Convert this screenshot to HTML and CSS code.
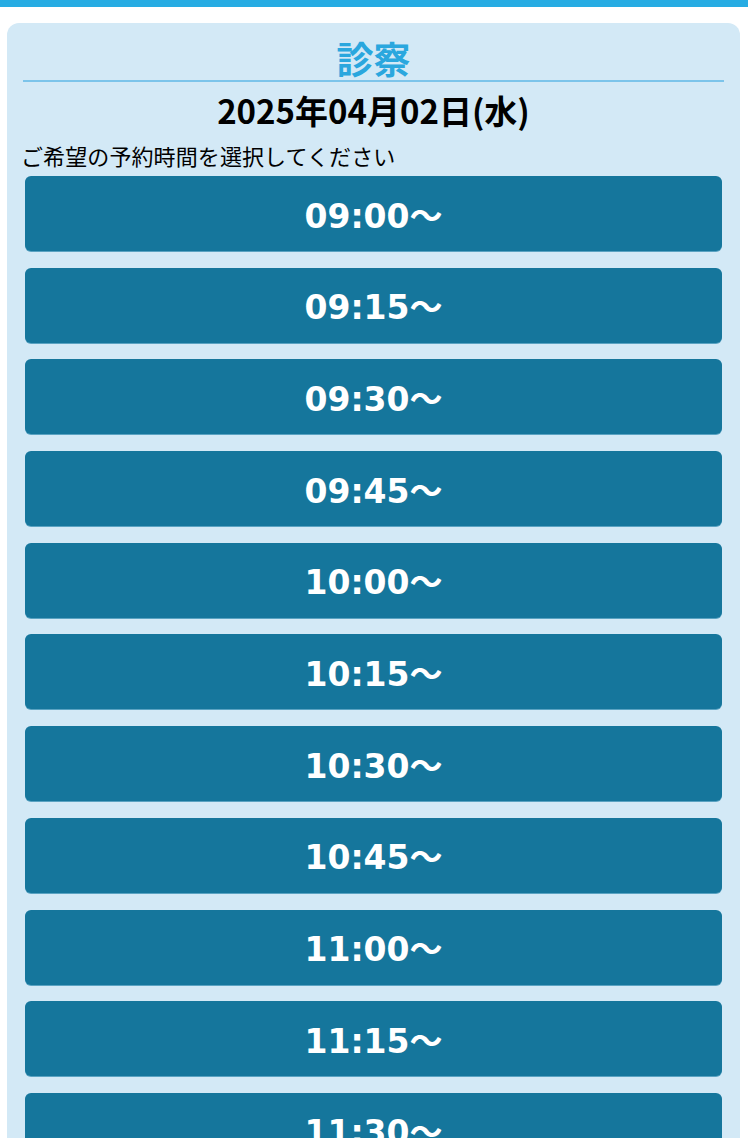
FILE: index.html
```html
<!DOCTYPE html>
<html lang="ja">
<head>
<meta charset="utf-8">
<title>診察</title>
<link rel="stylesheet" href="styles.css">
</head>
<body>
<div class="topbar"></div>
<main class="wrap">
  <section class="card">
    <h1 class="title">診察</h1>
    <p class="date">2025年04月02日(水)</p>
    <p class="lead">ご希望の予約時間を選択してください</p>
    <ul class="slots">
      <li><button class="slot">09:00〜</button></li>
      <li><button class="slot">09:15〜</button></li>
      <li><button class="slot">09:30〜</button></li>
      <li><button class="slot">09:45〜</button></li>
      <li><button class="slot">10:00〜</button></li>
      <li><button class="slot">10:15〜</button></li>
      <li><button class="slot">10:30〜</button></li>
      <li><button class="slot">10:45〜</button></li>
      <li><button class="slot">11:00〜</button></li>
      <li><button class="slot">11:15〜</button></li>
      <li><button class="slot">11:30〜</button></li>
      <li><button class="slot">11:45〜</button></li>
    </ul>
  </section>
</main>
</body>
</html>
```

FILE: styles.css
```css
html, body {
  margin: 0;
  padding: 0;
  background: #ffffff;
}
body {
  font-family: "Noto Sans CJK JP", "DejaVu Sans", sans-serif;
  color: #000;
}
.topbar {
  height: 7px;
  background: #27ace3;
}
.wrap {
  padding: 16px 8px 0 7px;
}
.card {
  background: #d3e9f6;
  border-radius: 12px;
  padding: 15px 16px 20px 16px;
}
.title {
  margin: 0;
  font-size: 37px;
  line-height: 40px;
  font-weight: 700;
  color: #2aa7de;
  text-align: center;
  padding-bottom: 2px;
  border-bottom: 2px solid #7cc4ea;
}
.date {
  margin: 10px 0 0 0;
  font-size: 33px;
  line-height: 36px;
  font-weight: 700;
  text-align: center;
}
.lead {
  margin: 13px 0 0 -2px;
  font-size: 22px;
  line-height: 28px;
  letter-spacing: 0.1px;
}
.slots {
  list-style: none;
  margin: 7px 0 0 0;
  padding: 0;
}
.slots li {
  margin: 0 2px 16.7px 2px;
}
.slot {
  display: flex;
  align-items: center;
  justify-content: center;
  width: 100%;
  height: 75px;
  border: 0;
  border-radius: 6px;
  background: #15769c;
  color: #ffffff;
  font-family: "DejaVu Sans", "Noto Sans CJK JP", sans-serif;
  font-weight: 700;
  font-size: 33px;
  padding: 0;
  box-shadow: 0 1px 0 #5aa3c2;
}
```
